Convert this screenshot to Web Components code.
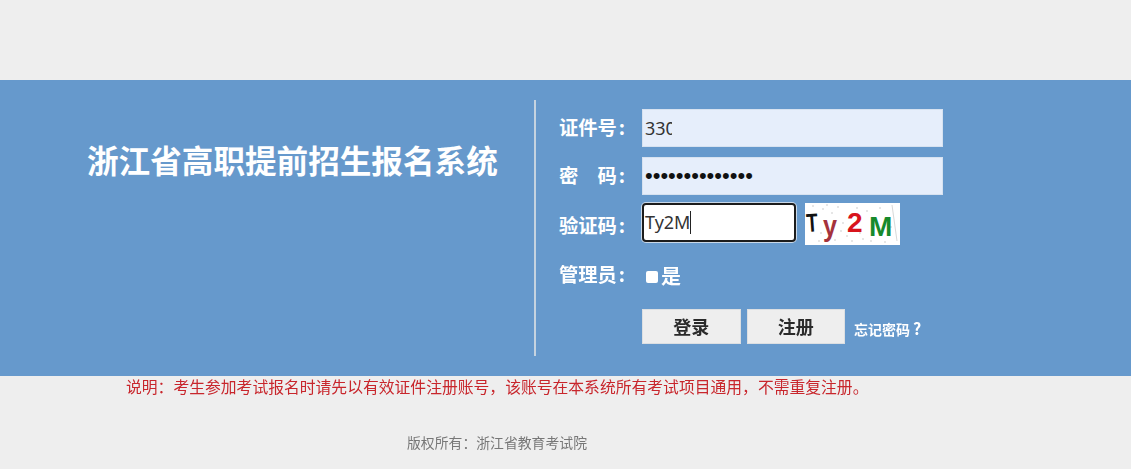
<!DOCTYPE html>
<html lang="zh-CN">
<head>
<meta charset="utf-8">
<title>浙江省高职提前招生报名系统</title>
<style>
html, body { margin: 0; padding: 0; background: #eeeeee; }
body { height: 469px; overflow: hidden; font-family: "Noto Sans CJK SC", "Liberation Sans", sans-serif; }
</style>
</head>
<body>
<login-page>
  <login-band>
    <span slot="title">浙江省高职提前招生报名系统</span>
    <login-form slot="form"></login-form>
  </login-band>
</login-page>

<script>
// Login page components

const bandTemplate = document.createElement('template');
bandTemplate.innerHTML = `
<style>
:host { display: flex; height: 296px; background: #6699cc; }
.title {
    width: 534px;
    box-sizing: border-box;
    padding: 57px 0 0 87px;
    font-size: 31.6px;
    font-weight: 700;
    line-height: 44px;
    color: #fff;
    white-space: nowrap;
}
.line { width: 2px; height: 256px; margin-top: 20px; background: #c5d3e0; }
.form { padding: 29px 0 0 23px; }
</style>
<div class="title"><slot name="title"></slot></div>
<div class="line"></div>
<div class="form"><slot name="form"></slot></div>
`;

class LoginBand extends HTMLElement {
    constructor() {
        super();
        this.attachShadow({mode: 'open'});
        this.shadowRoot.appendChild(bandTemplate.content.cloneNode(true));
    }
}
window.customElements.define('login-band', LoginBand);


const fieldTemplate = document.createElement('template');
fieldTemplate.innerHTML = `
<style>
:host {
    display: block;
    box-sizing: border-box;
    width: 301px;
    height: 38px;
    padding-left: 2px;
    background: #e6eefb;
    border: 1px solid #d7e2f0;
    color: #333;
    font-family: "Noto Sans", "Noto Sans CJK SC", sans-serif;
    font-size: 18px;
    line-height: 36px;
    white-space: nowrap;
    overflow: hidden;
}
:host([focused]) {
    width: 154px;
    height: 39px;
    background: #fff;
    border: 2px solid #1c1c1c;
    border-radius: 4px;
    box-shadow: 0 0 0 1px #c9d8e8;
    line-height: 35px;
    padding-left: 1px;
}
:host([clip]) .value { display: inline-block; width: 27px; overflow: hidden; vertical-align: top; }
:host([dots]) { color: #111; font-family: "Liberation Sans", sans-serif; font-size: 22px; font-weight: 400; }
.caret { display: none; width: 1px; height: 23px; background: #222; vertical-align: -5px; }
:host([focused]) .caret { display: inline-block; }
</style>
<span class="value"><slot></slot></span><span class="caret"></span>
`;

class LoginField extends HTMLElement {
    constructor() {
        super();
        this.attachShadow({mode: 'open'});
        this.shadowRoot.appendChild(fieldTemplate.content.cloneNode(true));
    }
}
window.customElements.define('login-field', LoginField);


const captchaTemplate = document.createElement('template');
captchaTemplate.innerHTML = `
<style>
:host { display: block; width: 95px; height: 42px; }
svg { display: block; }
text { font-family: "Liberation Sans", sans-serif; font-weight: 700; }
</style>
<svg width="95" height="42" viewBox="0 0 95 42">
  <rect width="95" height="42" fill="#fff"/>
  <path d="M87 2 L92 38" stroke="#d8d8d8" fill="none"/>
  <g id="dots" fill="#b9b9b9"></g>
  <text font-size="26" fill="#111" transform="translate(2 29) rotate(-4) scale(.72 1)">T</text>
  <text font-size="28" fill="#a5323c" transform="translate(18 33) scale(.9 1.05)">y</text>
  <text x="42" y="29" font-size="28" fill="#d8141c">2</text>
  <text x="64" y="33" font-size="28" fill="#178a2c">M</text>
</svg>
`;

class LoginCaptcha extends HTMLElement {
    constructor() {
        super();
        this.attachShadow({mode: 'open'});
        this.shadowRoot.appendChild(captchaTemplate.content.cloneNode(true));
        var dots = this.shadowRoot.querySelector('#dots');
        var spots = [[8,3],[18,6],[27,10],[33,4],[38,20],[16,30],[14,38],[30,37],[42,33],[52,5],[47,38],[58,36],[62,8],[66,38],[75,5],[80,39],[86,24],[55,30],[36,28],[22,2]];
        spots.forEach(function(p){
            var c = document.createElementNS('http://www.w3.org/2000/svg', 'circle');
            c.setAttribute('cx', p[0]);
            c.setAttribute('cy', p[1]);
            c.setAttribute('r', 0.7);
            dots.appendChild(c);
        });
    }
}
window.customElements.define('login-captcha', LoginCaptcha);


const formTemplate = document.createElement('template');
formTemplate.innerHTML = `
<style>
:host { display: block; color: #fff; }
.row { display: flex; align-items: center; }
.label {
    width: 66px;
    margin-right: 17px;
    padding-bottom: 2px;
    font-size: 19.3px;
    font-weight: 700;
    text-align: right;
    white-space: pre;
}
.label i { font-style: normal; margin-left: 2px; }
.r1 { height: 38px; margin-bottom: 10px; }
.r2 { height: 38px; margin-bottom: 8px; }
.r3 { height: 42px; align-items: flex-start; margin-bottom: 17px; }
.r3 .label { line-height: 44px; }
.r3 login-captcha { margin-left: 9px; }
.r4 { height: 28px; margin-bottom: 19px; }
.r4 .label { padding-bottom: 4px; }
.check { width: 12px; height: 12px; margin: 2px 0 0 4px; background: #fff; border-radius: 2px; }
.yes { margin-left: 3px; padding-bottom: 2px; font-size: 20px; font-weight: 700; }
.r5 { align-items: stretch; padding-left: 83px; }
button {
    width: 98.5px;
    height: 35px;
    padding: 0 0 2px;
    margin-right: 6px;
    background: #eeeeee;
    border: 1px solid #dcdfe2;
    color: #2a2a2a;
    font-family: inherit;
    font-size: 18px;
    font-weight: 700;
}
a {
    margin: 11px 0 0 3px;
    color: #fff;
    font-size: 14px;
    font-weight: 700;
    line-height: 17px;
    white-space: nowrap;
}
a span { margin-left: 3px; font-size: 16px; }
</style>
<div class="row r1"><span class="label">证件号<i>:</i></span><login-field clip>330</login-field></div>
<div class="row r2"><span class="label">密&emsp;码<i>:</i></span><login-field dots>••••••••••••••</login-field></div>
<div class="row r3"><span class="label">验证码<i>:</i></span><login-field focused>Ty2M</login-field><login-captcha></login-captcha></div>
<div class="row r4"><span class="label">管理员<i>:</i></span><span class="check"></span><span class="yes">是</span></div>
<div class="row r5"><button>登录</button><button>注册</button><a>忘记密码<span>?</span></a></div>
`;

class LoginForm extends HTMLElement {
    constructor() {
        super();
        this.attachShadow({mode: 'open'});
        this.shadowRoot.appendChild(formTemplate.content.cloneNode(true));
    }
}
window.customElements.define('login-form', LoginForm);


const pageTemplate = document.createElement('template');
pageTemplate.innerHTML = `
<style>
:host { display: block; padding-top: 80px; filter: blur(0.4px); }
.notice {
    color: #c8262c;
    font-size: 15.8px;
    line-height: 22px;
    padding-left: 126px;
    white-space: nowrap;
}
.copy {
    padding: 34px 0 0 407px;
    color: #777;
    font-size: 13.85px;
    line-height: 20px;
    white-space: nowrap;
}
</style>
<slot></slot>
<div class="notice">说明&#xFF1A;考生参加考试报名时请先以有效证件注册账号&#xFF0C;该账号在本系统所有考试项目通用&#xFF0C;不需重复注册。</div>
<div class="copy">版权所有&#xFF1A;浙江省教育考试院</div>
`;

class LoginPage extends HTMLElement {
    constructor() {
        super();
        this.attachShadow({mode: 'open'});
        this.shadowRoot.appendChild(pageTemplate.content.cloneNode(true));
    }
}
window.customElements.define('login-page', LoginPage);
</script>
</body>
</html>
